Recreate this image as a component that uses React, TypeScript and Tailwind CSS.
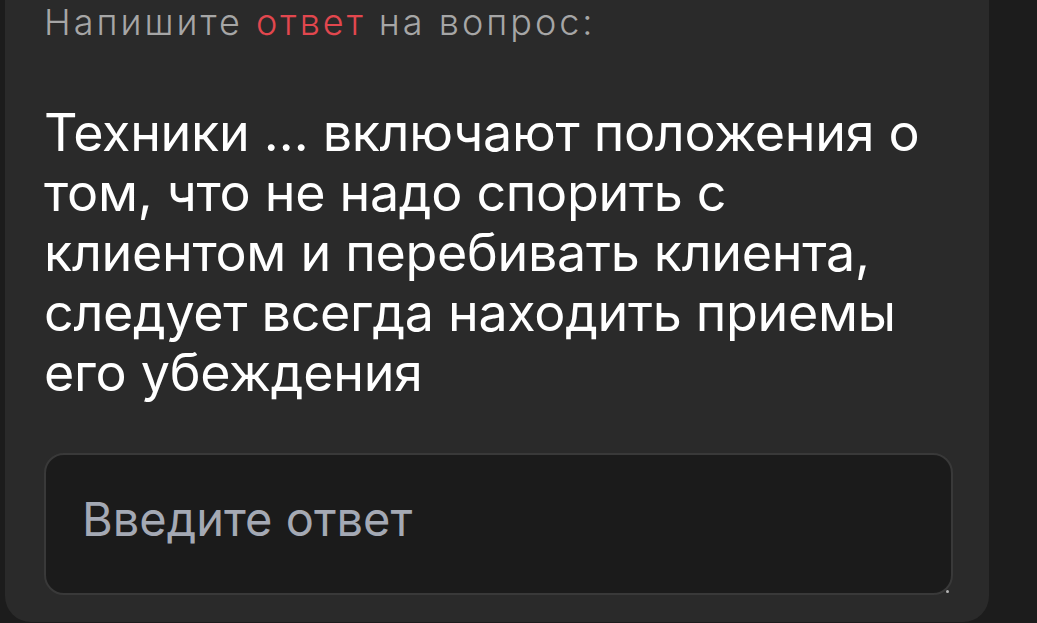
export default function App() {
  return (
    <div className="h-[623px] w-full overflow-hidden bg-[#1c1c1c] pl-[5px] pr-[48px] font-['Inter',sans-serif]">
      <section className="flex h-[622px] flex-col rounded-b-[26px] bg-[#2a2a2a] pt-[2px] pl-[39px] pr-[36px]">
        <p className="text-[36px] leading-[40px] font-light tracking-[3px] text-[#a6a6a6]">
          Напишите <span className="text-[#e2474e]">ответ</span> на вопрос:
        </p>

        <h2 className="mt-[61px] text-[52px] leading-[60px] font-normal tracking-[-0.3px] text-white">
          Техники … включают положения о том, что не надо спорить с клиентом и
          перебивать клиента, следует всегда находить приемы его убеждения
        </h2>

        <div className="relative mt-[50px]">
          <textarea
            placeholder="Введите ответ"
            className="block h-[142px] w-full resize-none rounded-[20px] border-2 border-[#393939] bg-[#1b1b1b] pt-[36px] pl-[36px] text-[47px] leading-[56px] text-white outline-none placeholder:text-[#a4a9b4]"
          />
          <span className="absolute right-[4px] bottom-[2px] h-[3px] w-[3px] rounded-full bg-[#b5b5b5]" />
        </div>
      </section>
    </div>
  );
}
